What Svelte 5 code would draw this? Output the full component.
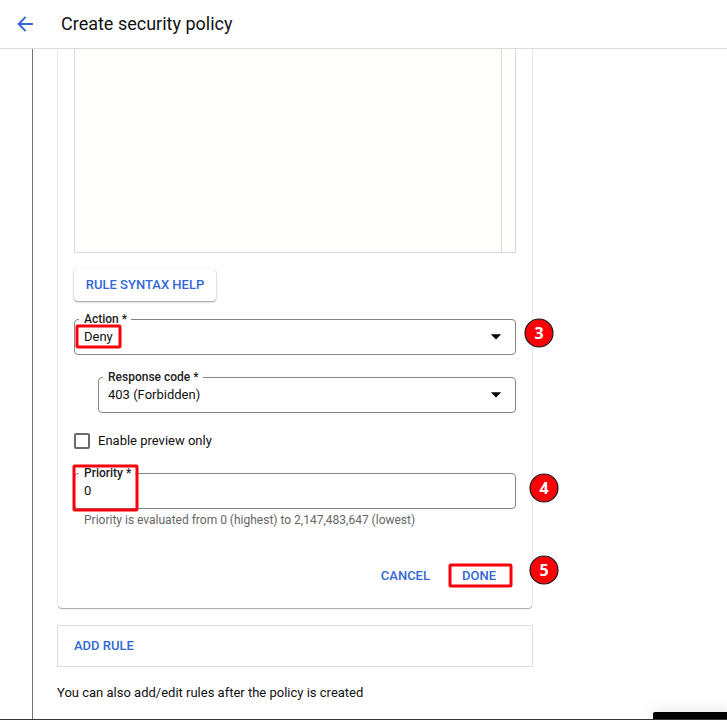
<script>
  const steps = [
    { n: 3, x: 539, y: 333 },
    { n: 4, x: 544, y: 488 },
    { n: 5, x: 544, y: 570 }
  ];
  const marks = [
    { x: 75.5, y: 324.5, w: 46, h: 24 },
    { x: 72.5, y: 464.5, w: 66, h: 47 },
    { x: 448.5, y: 563.5, w: 64, h: 24 }
  ];
</script>

{#snippet caret()}
  <svg class="caret" width="12" height="6" viewBox="0 0 12 6"><path d="M.8.3h10.4L6 5.6z" fill="#000" /></svg>
{/snippet}

<div class="page">
  <header>
    <svg width="18" height="18" viewBox="0 0 18 18" fill="none" stroke="#3367d6" stroke-width="2">
      <path d="M17 9H2.8M9.7 1.9L2.6 9l7.1 7.1" />
    </svg>
    <h1>Create security policy</h1>
  </header>
  <div class="body">
    <div class="rail"></div>
    <main>
      <section class="card">
        <div class="editor"><div class="code"></div></div>
        <button class="raised">RULE SYNTAX HELP</button>
        <fieldset class="field">
          <legend>Action *</legend>
          <span class="val">Deny</span>
          {@render caret()}
        </fieldset>
        <fieldset class="field nested">
          <legend>Response code *</legend>
          <span class="val">403 (Forbidden)</span>
          {@render caret()}
        </fieldset>
        <label class="check"><span class="box"></span><span>Enable preview only</span></label>
        <fieldset class="field priority">
          <legend>Priority *</legend>
          <span class="val">0</span>
        </fieldset>
        <p class="hint">Priority is evaluated from 0 (highest) to 2,147,483,647 (lowest)</p>
        <div class="actions"><button>CANCEL</button><button>DONE</button></div>
      </section>
      <div class="add"><button>ADD RULE</button></div>
      <p class="note">You can also add/edit rules after the policy is created</p>
    </main>
  </div>
  <div class="tray"></div>
  <div class="edge"></div>
  <svg class="marks" width="727" height="720">
    {#each marks as m}
      <rect class="mark" x={m.x + 1.5} y={m.y + 1.5} width={m.w - 3} height={m.h - 3} rx="0.8" />
    {/each}
    {#each steps as s}
      <circle cx={s.x} cy={s.y} r="14" />
      <text x={s.x} y={s.y + 6}>{s.n}</text>
    {/each}
  </svg>
</div>

<style>
  :global(body) { margin: 0; background: #fff; }
  .page, .page * { box-sizing: border-box; }
  .page {
    position: relative;
    width: 727px;
    height: 720px;
    overflow: hidden;
    display: flex;
    flex-direction: column;
    background: #fff;
    color: #111;
    font: 13px/20px Roboto, sans-serif;
  }
  header {
    height: 49px;
    flex: none;
    display: flex;
    align-items: center;
    gap: 27px;
    padding-left: 16px;
    border-bottom: 1px solid #dcdcdc;
  }
  h1 { margin: 0; font-size: 18px; font-weight: 400; line-height: 24px; color: #111; }
  p { margin: 0; }
  button {
    font: 500 13px/20px Roboto, sans-serif;
    color: #3367d6;
    background: none;
    border: 0;
    padding: 0;
  }
  .body { flex: 1; min-height: 0; display: flex; overflow: hidden; }
  .rail { width: 33px; flex: none; border-right: 1px solid #757575; }
  main { padding-left: 24px; width: 500px; flex: none; display: flex; flex-direction: column; }
  .card {
    margin-left: 1px;
    width: 474px;
    height: 559px;
    flex: none;
    padding: 0 16px;
    border-radius: 0 0 4px 4px;
    box-shadow: 0 1px 1px rgba(0, 0, 0, 0.3), 0 0 2px rgba(0, 0, 0, 0.22);
    display: flex;
    flex-direction: column;
  }
  .editor {
    height: 204px;
    flex: none;
    border: 1px solid #d9d9d9;
    border-top: 0;
    background: #fffffd;
  }
  .code { width: 427px; height: 100%; border-right: 1px solid #d9d9d9; }
  .raised {
    align-self: flex-start;
    width: 142px;
    height: 32px;
    margin-top: 16px;
    border-radius: 4px;
    box-shadow: 0 1px 2px rgba(0, 0, 0, 0.4), 0 0 1px rgba(0, 0, 0, 0.1);
  }
  .field {
    min-width: 0;
    margin: 12px 0 0;
    height: 42px;
    flex: none;
    padding: 1px 13px 0 4px;
    border: 1px solid #80868b;
    border-radius: 4px;
    display: flex;
    align-items: center;
    justify-content: space-between;
  }
  .nested { margin: 16px 0 0 24px; }
  legend {
    height: 13px;
    padding: 0 4px 0 5px;
    font-size: 12px;
    font-weight: 500;
    line-height: 13px;
    color: #222;
  }
  .val { padding-left: 5px; line-height: 20px; }
  .check { display: flex; align-items: center; gap: 8px; height: 20px; margin-top: 18px; }
  .box { width: 16px; height: 16px; border: 2px solid #6b6b6b; border-radius: 2px; }
  .priority { margin-top: 16px; }
  .hint { font-size: 12px; line-height: 16px; color: #666; padding-left: 10px; margin-top: 3px; }
  .actions { display: flex; justify-content: flex-end; gap: 32px; padding-right: 20px; margin-top: 38px; }
  .add {
    margin-top: 17px;
    width: 476px;
    height: 42px;
    flex: none;
    border: 1px solid #dcdcdc;
    display: flex;
    align-items: center;
    padding-left: 16px;
  }
  .note { margin-top: 16px; white-space: nowrap; }
  .marks { position: absolute; left: 0; top: 0; }
  .mark { fill: none; stroke: #fb0009; stroke-width: 3; }
  .marks circle { fill: #fb0007; stroke: #1a1a1a; stroke-width: 1.2; }
  .marks text { fill: #fff; font: 700 16px "Open Sans", sans-serif; text-anchor: middle; }
  .tray {
    position: absolute;
    left: 653px;
    top: 712px;
    width: 80px;
    height: 10px;
    background: #000;
    border-radius: 2px 0 0 0;
    box-shadow: 0 0 16px rgba(0, 0, 0, 0.13);
  }
  .edge { position: absolute; left: 0; top: 719px; width: 727px; height: 1px; background: #35353b; }
</style>
